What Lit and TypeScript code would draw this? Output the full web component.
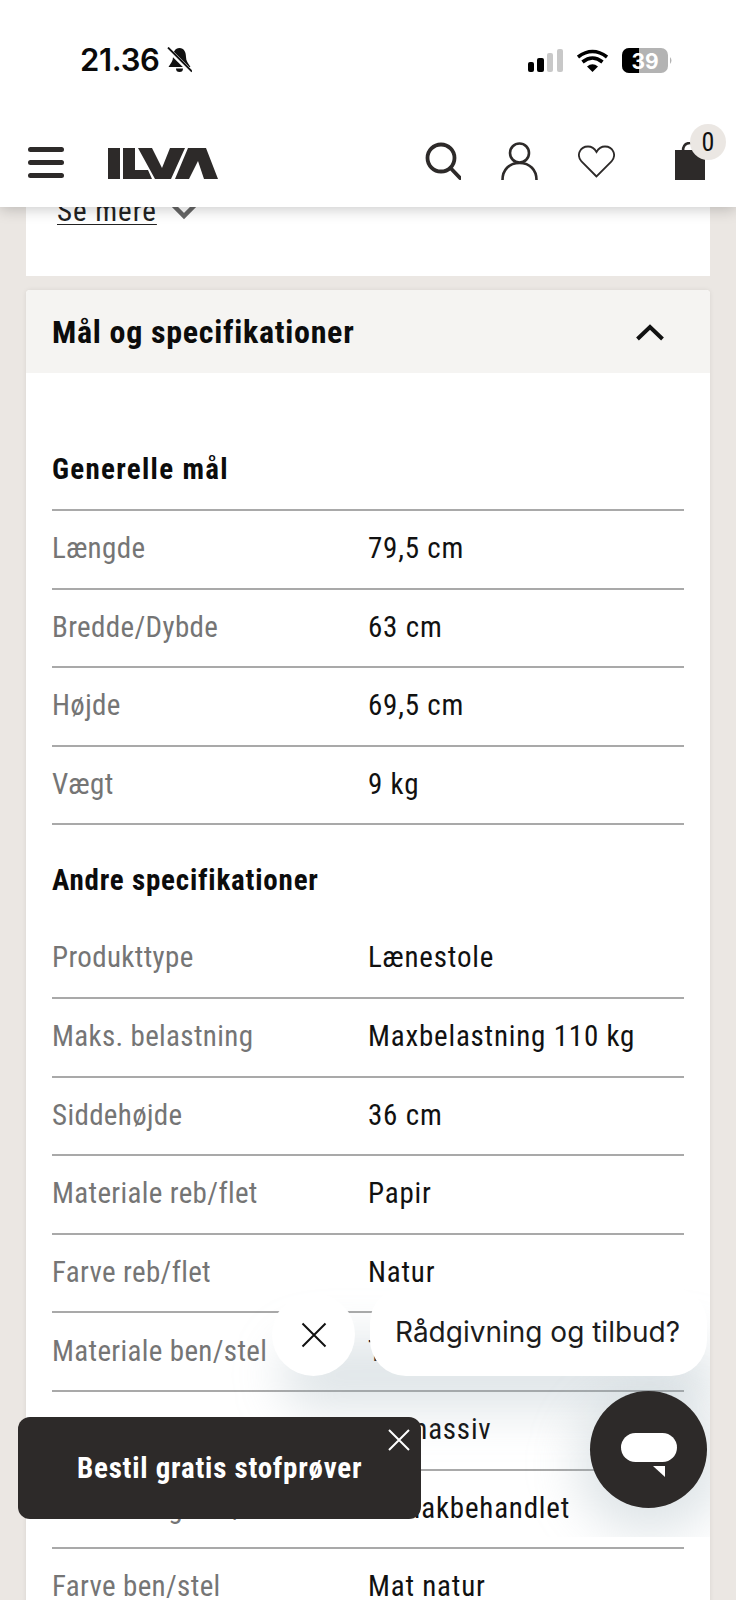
import { LitElement, css, html, svg } from "lit";
import { customElement } from "lit/decorators.js";

interface SpecRow {
  label: string;
  value: string;
}

const GENERAL: SpecRow[] = [
  { label: "Længde", value: "79,5 cm" },
  { label: "Bredde/Dybde", value: "63 cm" },
  { label: "Højde", value: "69,5 cm" },
  { label: "Vægt", value: "9 kg" },
];

const OTHER: SpecRow[] = [
  { label: "Produkttype", value: "Lænestole" },
  { label: "Maks. belastning", value: "Maxbelastning 110 kg" },
  { label: "Siddehøjde", value: "36 cm" },
  { label: "Materiale reb/flet", value: "Papir" },
  { label: "Farve reb/flet", value: "Natur" },
  { label: "Materiale ben/stel", value: "Træ" },
  { label: "Træsort ben/stel", value: "Eg massiv" },
  { label: "Behandling ben/stel", value: "Let lakbehandlet" },
  { label: "Farve ben/stel", value: "Mat natur" },
];

const icon = (w: number, h: number, body: unknown) =>
  html`<svg width=${w} height=${h} viewBox="0 0 ${w} ${h}" style="display:block">${body}</svg>`;

@customElement("app-root")
export class AppRoot extends LitElement {
  static styles = css`
    :host {
      display: block;
      position: relative;
      height: 1600px;
      overflow: hidden;
      background: #ebe7e3;
      font-family: "Roboto Condensed", "Liberation Sans", Arial, sans-serif;
      color: #111;
    }

    /* top chrome */
    .top {
      position: relative;
      z-index: 3;
      background: #fff;
      height: 207px;
      box-shadow: 0 2px 14px rgba(0, 0, 0, 0.22);
    }
    .status {
      height: 120px;
      display: flex;
      align-items: flex-start;
      justify-content: space-between;
      padding: 44px 62px 0 80px;
      box-sizing: border-box;
    }
    .time {
      display: flex;
      align-items: center;
      gap: 7px;
      font: 600 31px/32px Inter, sans-serif;
      letter-spacing: -0.3px;
      color: #0a0a0a;
    }
    .status-right {
      display: flex;
      align-items: center;
      gap: 14px;
      padding-top: 4px;
    }
    .nav {
      height: 87px;
      display: flex;
      align-items: flex-start;
      padding: 27px 0 0 28px;
      box-sizing: border-box;
    }
    .logo {
      margin-left: 44px;
      margin-top: 1px;
    }
    .nav-icons {
      margin-left: auto;
      display: flex;
      align-items: flex-start;
      gap: 40px;
      padding-right: 31px;
      margin-top: -5px;
    }
    .heart {
      padding-top: 3px;
    }
    .bag {
      position: relative;
      margin-left: 20px;
    }
    .badge {
      position: absolute;
      top: -18px;
      left: 15px;
      width: 36px;
      height: 36px;
      border-radius: 50%;
      background: #ebe7e3;
      color: #111;
      font-size: 26px;
      line-height: 36px;
      text-align: center;
    }

    /* page content */
    .content {
      padding: 0 26px;
    }
    .more-card {
      background: #fff;
      height: 69px;
      padding-left: 31px;
      box-sizing: border-box;
      display: flex;
      align-items: flex-start;
      gap: 14px;
      margin-bottom: 14px;
    }
    .more {
      margin-top: -13px;
      font-size: 29px;
      line-height: 34px;
      letter-spacing: 1px;
      color: #222;
      text-decoration: underline;
      text-underline-offset: 3px;
      text-decoration-thickness: 1px;
    }
    .more-chevron {
      margin-top: -5px;
    }
    .card {
      background: #fff;
      border-radius: 4px 4px 0 0;
      box-shadow: 0 0 5px rgba(0, 0, 0, 0.08);
    }
    .card-head {
      height: 83px;
      background: #f5f4f2;
      border-radius: 4px 4px 0 0;
      display: flex;
      align-items: center;
      justify-content: space-between;
      padding: 0 45px 0 26px;
      font-size: 32px;
      font-weight: 700;
      letter-spacing: 0.7px;
      color: #0c0c0c;
    }
    .card-body {
      padding: 0 26px;
    }
    h3 {
      margin: 0;
      font-size: 29px;
      font-weight: 700;
      color: #0c0c0c;
      line-height: 34px;
    }
    .first-title {
      padding: 79px 0 23px;
      letter-spacing: 1.3px;
    }
    .second-title {
      padding: 38px 0 21px;
      letter-spacing: 0.8px;
    }
    .row {
      display: grid;
      grid-template-columns: 316px 1fr;
      height: 78.6px;
      align-items: center;
      box-sizing: border-box;
      font-size: 29px;
      padding-bottom: 2px;
    }
    .row.lined {
      border-top: 2px solid #a9a9a9;
    }
    .rule {
      border-top: 2px solid #a9a9a9;
    }
    .label {
      color: #757575;
      letter-spacing: 0.35px;
    }
    .value {
      color: #111;
      letter-spacing: 0.8px;
    }

    /* floating widgets */
    .widget {
      position: absolute;
      z-index: 1;
      left: 230px;
      top: 1270px;
      width: 480px;
      height: 267px;
      overflow: hidden;
    }
    .glow {
      position: absolute;
      left: 50px;
      top: 70px;
      width: 440px;
      height: 70px;
      border-radius: 40px;
      background: rgba(150, 170, 180, 0.3);
      filter: blur(24px);
    }
    .glow-chat {
      position: absolute;
      left: 345px;
      top: 125px;
      width: 150px;
      height: 140px;
      border-radius: 50%;
      background: rgba(150, 170, 180, 0.3);
      filter: blur(24px);
    }
    .close-btn {
      position: absolute;
      z-index: 2;
      left: 272px;
      top: 1293px;
      width: 83px;
      height: 83px;
      border-radius: 50%;
      background: #fff;
      display: flex;
      align-items: center;
      justify-content: center;
    }
    .bubble {
      position: absolute;
      z-index: 2;
      left: 370px;
      top: 1287px;
      width: 337px;
      height: 89px;
      border-radius: 36px;
      background: #fff;
      font: 400 28px/91px Inter, sans-serif;
      color: #1c1c1c;
      padding-left: 25px;
      box-sizing: border-box;
    }
    .chat {
      position: absolute;
      z-index: 2;
      left: 590px;
      top: 1391px;
      width: 117px;
      height: 117px;
      border-radius: 50%;
      background: #2d2a29;
    }
    .chat svg {
      margin: 42px 0 0 31px;
    }
    .toast {
      position: absolute;
      z-index: 2;
      left: 18px;
      top: 1417px;
      width: 403px;
      height: 102px;
      border-radius: 12px;
      background: #2d2a29;
      color: #fff;
      font-size: 29px;
      font-weight: 700;
      letter-spacing: 0.75px;
      line-height: 102px;
      padding-left: 59px;
      box-sizing: border-box;
    }
    .toast-x {
      position: absolute;
      right: 11px;
      top: 12px;
    }
  `;

  private renderRows(rows: SpecRow[], lined: boolean) {
    return rows.map(
      (r, i) => html`
        <div class="row ${lined || i > 0 ? "lined" : ""}">
          <span class="label">${r.label}</span>
          <span class="value">${r.value}</span>
        </div>
      `
    );
  }

  private renderStatusIcons() {
    return html`
      ${icon(
        35,
        23,
        svg`<rect x="0" y="13" width="6" height="10" rx="2" fill="#000"/>
          <rect x="9" y="9" width="7" height="14" rx="2" fill="#000"/>
          <rect x="19" y="4" width="6" height="19" rx="2" fill="#c8c8c8"/>
          <rect x="29" y="0" width="6" height="23" rx="2" fill="#c8c8c8"/>`
      )}
      ${icon(
        31,
        23,
        svg`<path d="M15.500 23 L10 17.500 Q15.500 13 21 17.500Z" fill="#000"/>
          <path d="M5.500 13 Q15.500 5 25.500 13" fill="none" stroke="#000" stroke-width="3.600"/>
          <path d="M1 8 Q15.500 -3 30 8" fill="none" stroke="#000" stroke-width="3.600"/>`
      )}
      ${icon(
        52,
        25,
        svg`<rect x="0" y="0" width="46" height="25" rx="7" fill="#b3b3b3"/>
          <path d="M7 0 H17 V25 H7 A7 7 0 0 1 0 18 V7 A7 7 0 0 1 7 0Z" fill="#000"/>
          <path d="M48 9 Q51 12.500 48 16Z" fill="#b3b3b3"/>
          <text x="23" y="20.500" text-anchor="middle" font-family="Inter, sans-serif" font-size="21" font-weight="700" fill="#fff">39</text>`
      )}
    `;
  }

  render() {
    return html`
      <div class="top">
        <div class="status">
          <div class="time">
            21.36
            ${icon(
              25,
              26,
              svg`<path d="M12.500 1 C8 1 6 5 6 10 C6 14 4 16 1.500 20 H23.500 C21 16 19 14 19 10 C19 5 17 1 12.500 1Z" fill="#111"/>
                <path d="M9 21.500 H16 A3.500 3.500 0 0 1 9 21.500Z" fill="#111"/>
                <path d="M0 1 L24 25" stroke="#fff" stroke-width="4.500"/>
                <path d="M1 0.500 L25 24.500" stroke="#111" stroke-width="1.800"/>`
            )}
          </div>
          <div class="status-right">${this.renderStatusIcons()}</div>
        </div>
        <div class="nav">
          ${icon(
            36,
            32,
            svg`<rect x="0" y="0" width="36" height="5" rx="2.500" fill="#2d2a29"/>
              <rect x="0" y="13" width="36" height="5" rx="2.500" fill="#2d2a29"/>
              <rect x="0" y="26" width="36" height="5" rx="2.500" fill="#2d2a29"/>`
          )}
          <div class="logo">
            ${icon(
              110,
              31,
              svg`<path fill="#2d2a29" d="M0 0H12V31H0ZM15 0H27V22H40L44 31H15ZM30 0H44L54 20L62 0H77L63 31H47ZM67 31L80 0H98L110 31H96L90 13L81 31Z"/>`
            )}
          </div>
          <div class="nav-icons">
            ${icon(
              36,
              38,
              svg`<circle cx="16" cy="16" r="13.500" fill="none" stroke="#2d2a29" stroke-width="3.800"/>
                <path d="M25.500 26 L35 36" stroke="#2d2a29" stroke-width="3.800" stroke-linecap="round"/>`
            )}
            ${icon(
              37,
              38,
              svg`<circle cx="18.500" cy="11" r="9.500" fill="none" stroke="#2d2a29" stroke-width="2.600"/>
                <path d="M1.500 38 C1.500 28 8 21 18.500 21 C29 21 35.500 28 35.500 38" fill="none" stroke="#2d2a29" stroke-width="2.600"/>`
            )}
            <div class="heart">
              ${icon(
                37,
                33,
                svg`<path d="M18.500 31.500 L3.500 16.500 C-2 10 2 1.500 10 1.500 C14 1.500 16.500 3.500 18.500 7 C20.500 3.500 23 1.500 27 1.500 C35 1.500 39 10 33.500 16.500Z" fill="none" stroke="#2d2a29" stroke-width="1.800"/>`
              )}
            </div>
            <div class="bag">
              ${icon(
                30,
                38,
                svg`<path d="M8 9 C8 3 11 1 15 1 C19 1 22 3 22 9" fill="none" stroke="#2d2a29" stroke-width="2.500"/>
                  <rect x="0" y="8" width="30" height="30" fill="#2d2a29"/>`
              )}
              <span class="badge">0</span>
            </div>
          </div>
        </div>
      </div>

      <div class="content">
        <div class="more-card">
          <span class="more">Se mere</span>
          <span class="more-chevron">
            ${icon(
              26,
              18,
              svg`<path d="M2 3 L13 14 L24 3" fill="none" stroke="#666" stroke-width="4.500"/>`
            )}
          </span>
        </div>
        <div class="card">
          <div class="card-head">
            Mål og specifikationer
            ${icon(
              30,
              18,
              svg`<path d="M2.500 16 L15 4 L27.500 16" fill="none" stroke="#111" stroke-width="4"/>`
            )}
          </div>
          <div class="card-body">
            <h3 class="first-title">Generelle mål</h3>
            ${this.renderRows(GENERAL, true)}
            <div class="rule"></div>
            <h3 class="second-title">Andre specifikationer</h3>
            ${this.renderRows(OTHER, false)}
          </div>
        </div>
      </div>

      <div class="widget">
        <div class="glow"></div>
        <div class="glow-chat"></div>
      </div>
      <div class="close-btn">
        ${icon(
          26,
          26,
          svg`<path d="M1.500 1.500 L24.500 24.500 M24.500 1.500 L1.500 24.500" stroke="#111" stroke-width="2"/>`
        )}
      </div>
      <div class="bubble">Rådgivning og tilbud?</div>
      <div class="chat">
        ${icon(
          56,
          46,
          svg`<rect x="0" y="0" width="56" height="29" rx="14.500" fill="#fff"/>
            <path d="M32 33 H44 V44Z" fill="#fff"/>`
        )}
      </div>
      <div class="toast">
        Bestil gratis stofprøver
        <span class="toast-x">
          ${icon(
            22,
            22,
            svg`<path d="M1 1 L21 21 M21 1 L1 21" stroke="#fff" stroke-width="2"/>`
          )}
        </span>
      </div>
    `;
  }
}
